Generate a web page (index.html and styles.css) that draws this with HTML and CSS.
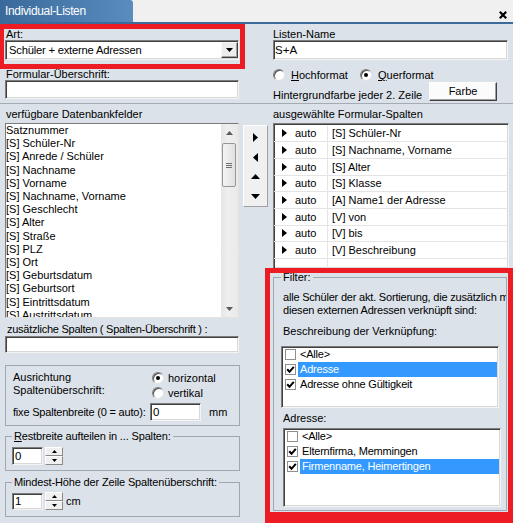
FILE: index.html
```html
<!DOCTYPE html>
<html lang="de">
<head>
<meta charset="utf-8">
<title>Individual-Listen</title>
<link rel="stylesheet" href="styles.css">
</head>
<body>
<div class="titlebar">
  <div class="tab">Individual-Listen</div>
  <div class="close"><svg width="8" height="8" viewBox="0 0 8 8"><path d="M0.8 0.8L7.2 7.2M7.2 0.8L0.8 7.2" stroke="#000" stroke-width="2.2" fill="none"/></svg></div>
</div>

<div class="top">
  <div class="top-left">
    <div class="redbox art">
      <div class="lbl">Art:</div>
      <div class="combo sunken">
        <span class="combo-text">Schüler + externe Adressen</span>
        <span class="dropbtn"><svg width="7" height="4" viewBox="0 0 7 4"><path d="M0 0H7L3.5 4Z" fill="#000"/></svg></span>
      </div>
    </div>
    <div class="lbl lbl-f">Formular-Überschrift:</div>
    <div class="sunken in-f"></div>
  </div>
  <div class="top-right">
    <div class="lbl">Listen-Name</div>
    <div class="sunken in-name">S+A</div>
    <div class="radios">
      <span class="ritem rb1"><span class="radio"></span><span><u>H</u>ochformat</span></span>
      <span class="ritem"><span class="radio on"></span><span><u>Q</u>uerformat</span></span>
    </div>
    <div class="bgrow"><span class="bgtxt">Hintergrundfarbe jeder 2. Zeile</span><span class="btn">Farbe</span></div>
  </div>
</div>

<div class="mid">
  <div class="col-left">
    <div class="lbl lbl-db">verfügbare Datenbankfelder</div>
    <div class="listbox">
      <div class="items">
        <div>Satznummer</div>
        <div>[S] Schüler-Nr</div>
        <div>[S] Anrede / Schüler</div>
        <div>[S] Nachname</div>
        <div>[S] Vorname</div>
        <div>[S] Nachname, Vorname</div>
        <div>[S] Geschlecht</div>
        <div>[S] Alter</div>
        <div>[S] Straße</div>
        <div>[S] PLZ</div>
        <div>[S] Ort</div>
        <div>[S] Geburtsdatum</div>
        <div>[S] Geburtsort</div>
        <div>[S] Eintrittsdatum</div>
        <div>[S] Austrittsdatum</div>
      </div>
      <div class="vscroll">
        <div class="sb-btn"><svg width="7" height="4" viewBox="0 0 7 4"><path d="M0 4L3.5 0L7 4Z" fill="#5a5a5a"/></svg></div>
        <div class="thumb"><i></i><i></i><i></i></div>
        <div class="sb-fill"></div>
        <div class="sb-btn"><svg width="7" height="4" viewBox="0 0 7 4"><path d="M0 0H7L3.5 4Z" fill="#5a5a5a"/></svg></div>
      </div>
    </div>
    <div class="lbl lbl-zs">zusätzliche Spalten ( Spalten-Überschrift ) :</div>
    <div class="sunken in-zs"></div>

    <div class="ga">
      <div class="ga-row1">
        <div class="ga-text">Ausrichtung<br>Spaltenüberschrift:</div>
        <div class="ga-radios">
          <div class="ritem ga-r"><span class="radio on"></span><span>horizontal</span></div>
          <div class="ritem ga-r"><span class="radio"></span><span>vertikal</span></div>
        </div>
      </div>
      <div class="ga-row2">
        <span class="ga-lbl">fixe Spaltenbreite (0 = auto):</span>
        <span class="sunken in-fix">0</span>
        <span class="mm">mm</span>
      </div>
    </div>

    <fieldset class="fs gb">
      <legend><u>R</u>estbreite aufteilen in ... Spalten:</legend>
      <div class="spin">
        <span class="sunken spin-in">0</span>
        <span class="spin-btns">
          <span class="sbtn"><svg width="5" height="3" viewBox="0 0 5 3"><path d="M0 3L2.5 0L5 3Z" fill="#000"/></svg></span>
          <span class="sbtn"><svg width="5" height="3" viewBox="0 0 5 3"><path d="M0 0H5L2.5 3Z" fill="#000"/></svg></span>
        </span>
      </div>
    </fieldset>

    <fieldset class="fs gc">
      <legend>Mindest-Höhe der Zeile Spaltenüberschrift:</legend>
      <div class="spin">
        <span class="sunken spin-in">1</span>
        <span class="spin-btns">
          <span class="sbtn"><svg width="5" height="3" viewBox="0 0 5 3"><path d="M0 3L2.5 0L5 3Z" fill="#000"/></svg></span>
          <span class="sbtn"><svg width="5" height="3" viewBox="0 0 5 3"><path d="M0 0H5L2.5 3Z" fill="#000"/></svg></span>
        </span>
        <span class="cm">cm</span>
      </div>
    </fieldset>
  </div>

  <div class="arrows">
    <div><svg width="5" height="9" viewBox="0 0 5 9"><path d="M0 0L5 4.5L0 9Z" fill="#000"/></svg></div>
    <div><svg width="5" height="9" viewBox="0 0 5 9"><path d="M5 0L0 4.5L5 9Z" fill="#000"/></svg></div>
    <div><svg width="9" height="5" viewBox="0 0 9 5"><path d="M0 5L4.5 0L9 5Z" fill="#000"/></svg></div>
    <div><svg width="9" height="5" viewBox="0 0 9 5"><path d="M0 0H9L4.5 5Z" fill="#000"/></svg></div>
  </div>

  <div class="col-right">
    <div class="lbl lbl-sel">ausgewählte Formular-Spalten</div>
    <div class="grid sunken">
      <div class="grow"><span class="c1"><svg width="5" height="8" viewBox="0 0 5 8"><path d="M0 0L5 4L0 8Z" fill="#000"/></svg><span>auto</span></span><span class="c2">[S] Schüler-Nr</span></div>
      <div class="grow"><span class="c1"><svg width="5" height="8" viewBox="0 0 5 8"><path d="M0 0L5 4L0 8Z" fill="#000"/></svg><span>auto</span></span><span class="c2">[S] Nachname, Vorname</span></div>
      <div class="grow"><span class="c1"><svg width="5" height="8" viewBox="0 0 5 8"><path d="M0 0L5 4L0 8Z" fill="#000"/></svg><span>auto</span></span><span class="c2">[S] Alter</span></div>
      <div class="grow"><span class="c1"><svg width="5" height="8" viewBox="0 0 5 8"><path d="M0 0L5 4L0 8Z" fill="#000"/></svg><span>auto</span></span><span class="c2">[S] Klasse</span></div>
      <div class="grow"><span class="c1"><svg width="5" height="8" viewBox="0 0 5 8"><path d="M0 0L5 4L0 8Z" fill="#000"/></svg><span>auto</span></span><span class="c2">[A] Name1 der Adresse</span></div>
      <div class="grow"><span class="c1"><svg width="5" height="8" viewBox="0 0 5 8"><path d="M0 0L5 4L0 8Z" fill="#000"/></svg><span>auto</span></span><span class="c2">[V] von</span></div>
      <div class="grow"><span class="c1"><svg width="5" height="8" viewBox="0 0 5 8"><path d="M0 0L5 4L0 8Z" fill="#000"/></svg><span>auto</span></span><span class="c2">[V] bis</span></div>
      <div class="grow"><span class="c1"><svg width="5" height="8" viewBox="0 0 5 8"><path d="M0 0L5 4L0 8Z" fill="#000"/></svg><span>auto</span></span><span class="c2">[V] Beschreibung</span></div>
      <div class="grow"><span class="c1"></span><span class="c2"></span></div>
    </div>

    <div class="redbox filterbox">
      <fieldset class="fs filter">
        <legend>Filter:</legend>
        <p class="ftext">alle Schüler der akt. Sortierung, die zusätzlich mit<br>diesen externen Adressen verknüpft sind:</p>
        <p class="flbl fl1">Beschreibung der Verknüpfung:</p>
        <div class="cl sunken cl1">
          <div class="ci"><span class="cb"></span><span class="ct">&lt;Alle&gt;</span></div>
          <div class="ci"><span class="cb"><svg width="9" height="9" viewBox="0 0 9 9"><path d="M1.2 4.3L3.5 6.8L7.8 1.8" stroke="#000" stroke-width="2" fill="none"/></svg></span><span class="ct sel">Adresse</span></div>
          <div class="ci"><span class="cb"><svg width="9" height="9" viewBox="0 0 9 9"><path d="M1.2 4.3L3.5 6.8L7.8 1.8" stroke="#000" stroke-width="2" fill="none"/></svg></span><span class="ct">Adresse ohne Gültigkeit</span></div>
        </div>
        <p class="flbl fl2">Adresse:</p>
        <div class="cl sunken cl2">
          <div class="ci"><span class="cb"></span><span class="ct">&lt;Alle&gt;</span></div>
          <div class="ci"><span class="cb"><svg width="9" height="9" viewBox="0 0 9 9"><path d="M1.2 4.3L3.5 6.8L7.8 1.8" stroke="#000" stroke-width="2" fill="none"/></svg></span><span class="ct">Elternfirma, Memmingen</span></div>
          <div class="ci"><span class="cb"><svg width="9" height="9" viewBox="0 0 9 9"><path d="M1.2 4.3L3.5 6.8L7.8 1.8" stroke="#000" stroke-width="2" fill="none"/></svg></span><span class="ct sel">Firmenname, Heimertingen</span></div>
        </div>
      </fieldset>
    </div>
  </div>
</div>
</body>
</html>
```

FILE: styles.css
```css
* { box-sizing: border-box; }
html, body { margin: 0; padding: 0; }
body {
  width: 513px;
  height: 523px;
  overflow: hidden;
  background: #dbe2e9;
  font-family: "Liberation Sans", Arial, sans-serif;
  font-size: 11px;
  color: #000;
}

/* title */
.titlebar {
  display: flex;
  height: 24px;
  background: #f0f0f0;
  border-bottom: 2px solid #3b6b9c;
}
.tab {
  width: 133px;
  height: 22px;
  padding-left: 5px;
  line-height: 23px;
  font-size: 12px;
  letter-spacing: -0.35px;
  color: #fff;
  background: linear-gradient(to right, #3a6a9b, #5a8cc0);
  border-top-right-radius: 3px;
}
.close { margin-left: auto; margin-right: 6px; padding-top: 9px; }

/* shared */
.lbl { line-height: 11px; white-space: nowrap; }
.tight { letter-spacing: -0.2px; }
.sunken {
  background: #fff;
  border: 1px solid;
  border-color: #7c7c7c #f4f4f4 #f4f4f4 #7c7c7c;
  box-shadow: inset 1px 1px 0 #404040, inset -1px -1px 0 #d8d8d8;
}
.redbox { border: 5px solid #ed1c24; }

/* top section */
.top { display: flex; height: 79px; }
.top-left { width: 245px; }
.art { height: 45px; border-left-width: 4px; padding-left: 1px; }
.art .lbl { padding-left: 1px; }
.combo { display: flex; align-items: center; width: 234px; height: 20px; }
.combo-text { flex: 1; padding-left: 3px; line-height: 18px; font-size: 11.2px; letter-spacing: -0.2px; white-space: nowrap; }
.dropbtn {
  width: 17px;
  height: 16px;
  display: flex;
  align-items: center;
  justify-content: center;
  background: #ececec;
  border: 1px solid;
  border-color: #f8f8f8 #404040 #404040 #f8f8f8;
  box-shadow: inset -1px -1px 0 #a0a0a0;
}
.lbl-f { padding-left: 6px; }
.in-f { margin-left: 5px; width: 234px; height: 19px; }

.top-right { margin-left: 28px; width: 235px; padding-top: 5px; }
.in-name { height: 20px; padding-left: 1px; line-height: 18px; font-size: 11.5px; }
.radios { display: flex; align-items: center; height: 14px; margin-top: 8px; }
.ritem { display: flex; align-items: center; gap: 6px; white-space: nowrap; }
.rb1 { width: 87px; }
.radio {
  width: 12px;
  height: 12px;
  flex: none;
  border-radius: 50%;
  background: #fff;
  border: 1px solid;
  border-color: #7e7e7e #e4e4e4 #e4e4e4 #7e7e7e;
  box-shadow: inset 1px 1px 0 #505050;
  display: flex;
  align-items: center;
  justify-content: center;
}
.radio.on::after {
  content: "";
  width: 4px;
  height: 4px;
  border-radius: 50%;
  background: #000;
}
.bgrow { display: flex; align-items: flex-end; height: 19px; }
.bgtxt { line-height: 11px; white-space: nowrap; }
.btn {
  margin-left: auto;
  margin-right: 11px;
  width: 68px;
  height: 19px;
  line-height: 17px;
  text-align: center;
  background: #fbfbfb;
  border: 1px solid;
  border-color: #fff #404040 #404040 #fff;
  box-shadow: inset -1px -1px 0 #a0a0a0;
}

/* middle */
.mid { display: flex; height: 420px; border-top: 1px solid #a4abb3; }
.col-left { width: 240px; padding-left: 5px; }
.lbl-db { margin-top: 5px; padding-left: 1px; }
.listbox {
  margin-top: 3px;
  width: 234px;
  height: 195px;
  display: flex;
  background: #fff;
  border: 1px solid;
  border-color: #7a7a7a #e3e3e3 #e3e3e3 #7a7a7a;
}
.items { flex: 1; overflow: hidden; line-height: 13.2px; white-space: nowrap; }
.vscroll {
  width: 17px;
  display: flex;
  flex-direction: column;
  background: linear-gradient(to right, #e6e6e6, #efefef 40%, #e9e9e9);
}
.sb-btn { height: 17px; display: flex; align-items: center; justify-content: center; }
.thumb {
  margin: 2px 2px 0 1px;
  height: 44px;
  border: 1px solid #979797;
  border-radius: 2px;
  background: linear-gradient(to right, #f4f4f4, #e0e0e0);
  display: flex;
  flex-direction: column;
  align-items: center;
  justify-content: center;
  gap: 1px;
}
.thumb i { display: block; width: 6px; height: 1px; background: #707070; }
.sb-fill { flex: 1; }

.lbl-zs { margin-top: 6px; padding-left: 2px; letter-spacing: -0.25px; }
.in-zs { margin-top: 1px; width: 234px; height: 17px; }

.ga {
  margin-top: 12px;
  width: 235px;
  height: 61px;
  border: 1px solid #a0a7af;
  padding: 5px 0 0 7px;
}
.ga-row1 { display: flex; }
.ga-text { width: 139px; line-height: 12.5px; white-space: nowrap; }
.ga-radios { margin-top: -1px; }
.ga-r { height: 15px; gap: 4px; }
.ga-row2 { display: flex; align-items: center; margin-top: 3px; height: 18px; }
.ga-lbl { width: 137px; white-space: nowrap; letter-spacing: -0.2px; }
.in-fix { width: 51px; height: 18px; line-height: 16px; padding-left: 2px; font-size: 11.5px; }
.mm { margin-left: 8px; }

.fs {
  margin: 0;
  min-width: 0;
  border: 1px solid #a0a7af;
}
.fs legend { padding: 0 2px; line-height: 12px; white-space: nowrap; }
.gb legend, .gc legend { letter-spacing: -0.15px; }
.gb { margin-top: 4px; width: 235px; height: 41px; padding: 5px 0 0 6px; }
.gc { margin-top: 5px; width: 235px; height: 41px; padding: 4px 0 0 6px; }
.spin { display: flex; align-items: center; }
.spin-in { width: 31px; height: 18px; line-height: 16px; padding-left: 2px; font-size: 11.5px; }
.gc .spin-in { height: 17px; line-height: 15px; }
.spin-btns { display: flex; flex-direction: column; margin-left: 2px; height: 18px; }
.sbtn {
  width: 18px;
  height: 9px;
  display: flex;
  align-items: center;
  justify-content: center;
  background: #f0f0f0;
  border: 1px solid;
  border-color: #fff #8a8a8a #8a8a8a #fff;
}
.cm { margin-left: 3px; }

/* arrow buttons */
.arrows {
  margin-top: 21px;
  margin-left: 3px;
  width: 25px;
  height: 82px;
  padding-top: 2px;
  background: #f0f0f0;
  border: 1px solid;
  border-color: #fff #a0a0a0 #a0a0a0 #fff;
  display: flex;
  flex-direction: column;
}
.arrows div { height: 20px; display: flex; align-items: center; justify-content: center; }

/* right column */
.col-right { margin-left: 5px; width: 240px; }
.lbl-sel { margin-top: 5px; }
.grid {
  margin-top: 3px;
  width: 236px;
  height: 145px;
  border-bottom: 0;
  padding-top: 1.67px;
  overflow: hidden;
}
.grow { display: flex; height: 16.67px; border-bottom: 1px solid #e4e4e4; }
.c1 {
  width: 54px;
  flex: none;
  display: flex;
  align-items: center;
  gap: 8px;
  padding-left: 8px;
  border-right: 1px solid #e4e4e4;
}
.c2 { display: flex; align-items: center; padding-left: 4px; white-space: nowrap; }

.filterbox {
  margin-left: -8px;
  width: 248px;
  height: 255px;
  border-bottom-width: 11px;
  padding-left: 3px;
}
.filter { width: 234px; height: 238px; padding: 0 0 0 7px; }
.filter legend { line-height: 9px; }
.filter p { margin: 0; padding-left: 2px; white-space: nowrap; overflow: hidden; }
.ftext { margin-top: 9px !important; line-height: 13.4px; letter-spacing: -0.2px; }
.flbl { line-height: 13px; }
.fl1 { margin-top: 7.4px !important; }
.fl2 { margin-top: 3.8px !important; }
.cl { width: 218px; overflow: hidden; }
.cl1 { margin-top: 7.8px; height: 62px; }
.cl2 { margin-top: 3.5px; margin-left: 2px; height: 78.4px; }
.ci { display: flex; align-items: center; height: 15px; }
.cb {
  width: 11px;
  height: 11px;
  flex: none;
  margin-left: 3px;
  border: 1px solid #8f8f8f;
  background: #fff;
  display: flex;
  align-items: center;
  justify-content: center;
}
.ct { flex: 1; margin-left: 2px; margin-right: 1px; padding-left: 2px; line-height: 15px; white-space: nowrap; letter-spacing: -0.2px; }
.ct.sel { background: #3399ff; color: #fff; }
```
